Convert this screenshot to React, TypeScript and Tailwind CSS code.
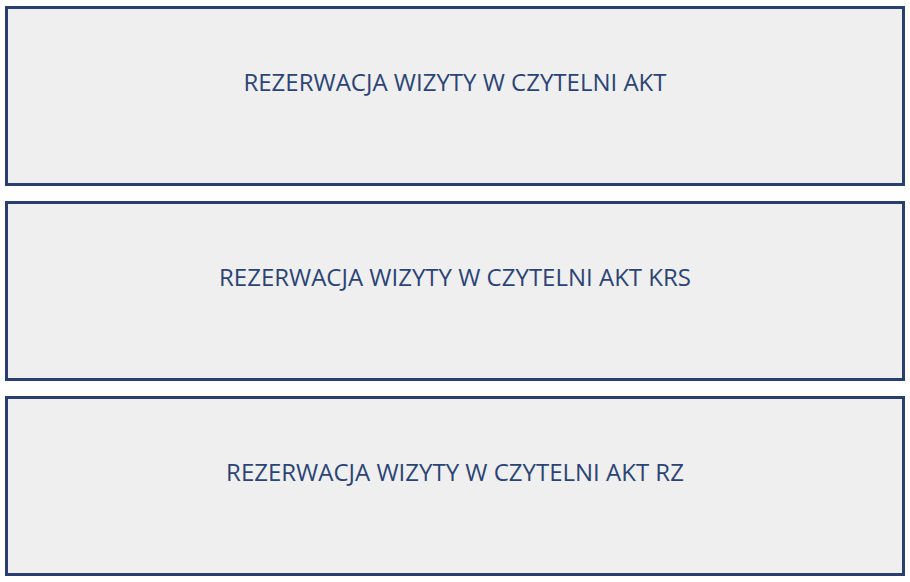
const items = [
  'REZERWACJA WIZYTY W CZYTELNI AKT',
  'REZERWACJA WIZYTY W CZYTELNI AKT KRS',
  'REZERWACJA WIZYTY W CZYTELNI AKT RZ',
];

export default function App() {
  return (
    <div className="min-h-[582px] w-[910px] bg-white pl-[5px] pt-[6px] font-['Open_Sans',sans-serif]">
      <div className="flex w-[900px] flex-col gap-[15px]">
        {items.map((label) => (
          <a
            key={label}
            href="#"
            className="block h-[180px] border-[3px] border-[#283f6e] bg-[#efefef] pt-[57px] text-center text-[24px] leading-[32px] text-[#2b4474]"
          >
            {label}
          </a>
        ))}
      </div>
    </div>
  );
}
